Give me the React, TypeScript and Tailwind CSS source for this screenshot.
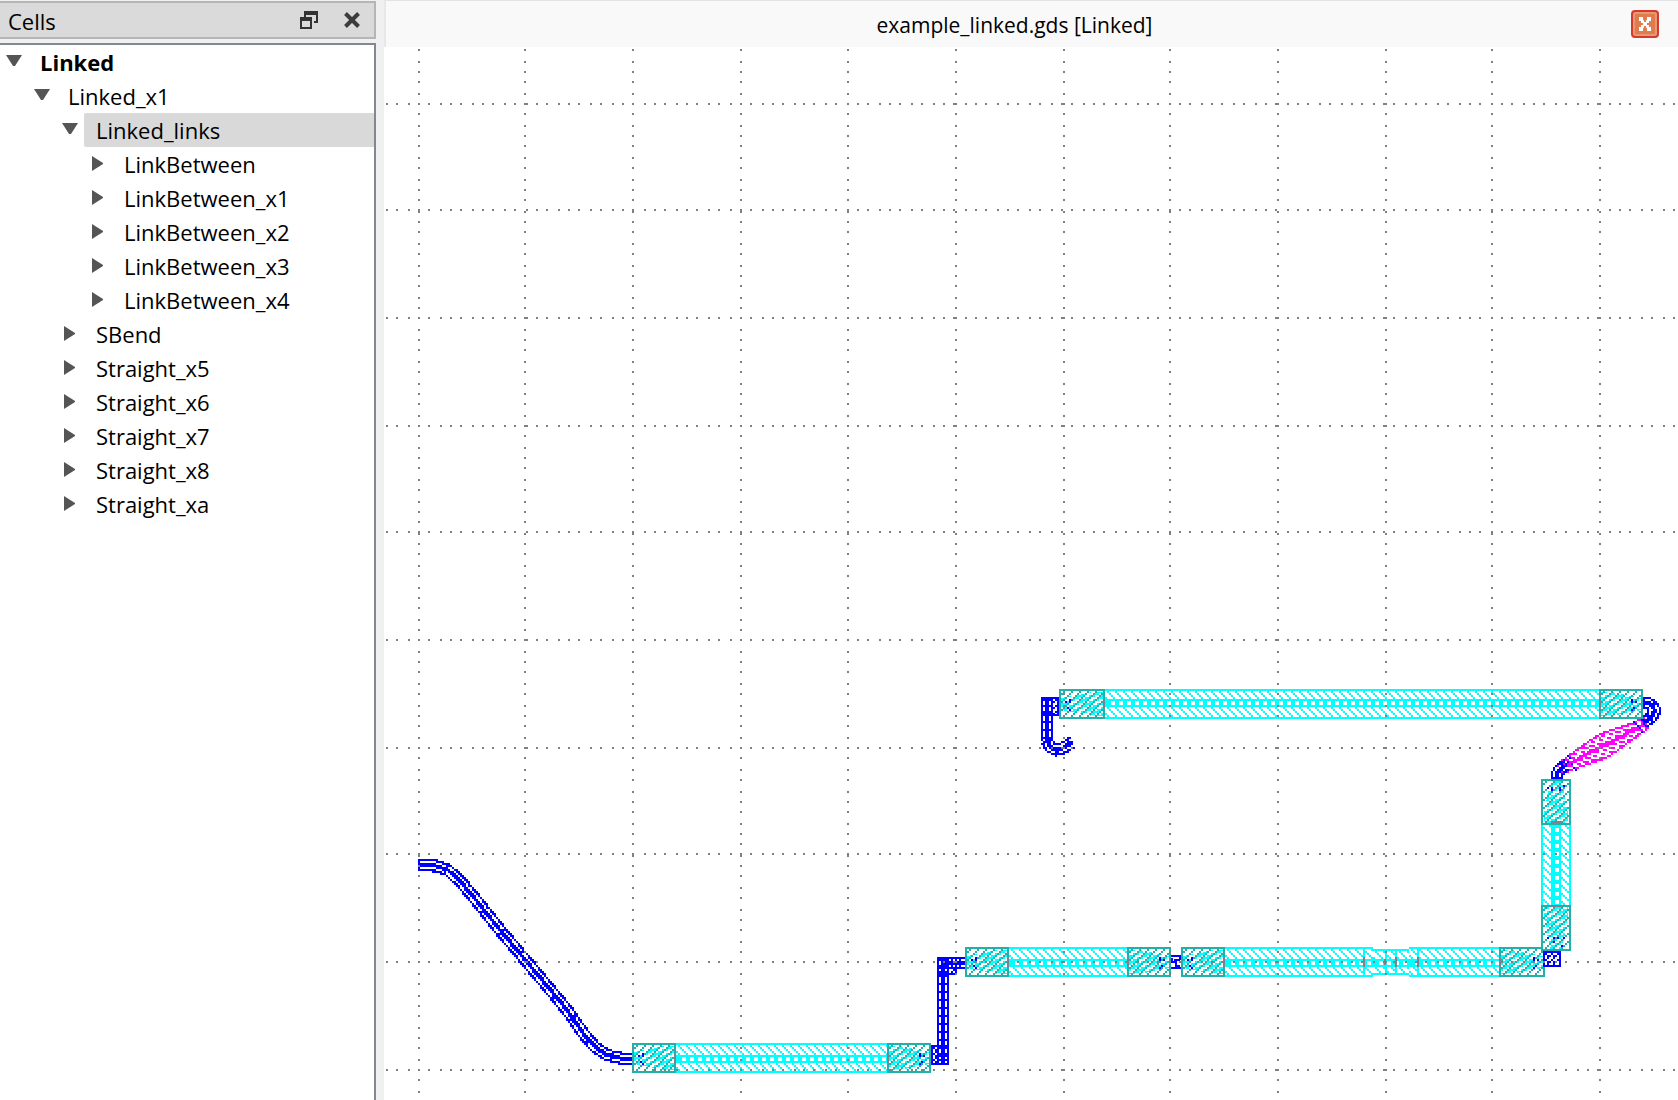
import { useState } from "react"
import { clsx } from "clsx"

type Cell = { name: string; level: number; open?: boolean }
type Point = [number, number]
type Side = "left" | "right" | "top" | "bottom"

const cells: Cell[] = [
  { name: "Linked", level: 0, open: true },
  { name: "Linked_x1", level: 1, open: true },
  { name: "Linked_links", level: 2, open: true },
  { name: "LinkBetween", level: 3 },
  { name: "LinkBetween_x1", level: 3 },
  { name: "LinkBetween_x2", level: 3 },
  { name: "LinkBetween_x3", level: 3 },
  { name: "LinkBetween_x4", level: 3 },
  { name: "SBend", level: 2 },
  { name: "Straight_x5", level: 2 },
  { name: "Straight_x6", level: 2 },
  { name: "Straight_x7", level: 2 },
  { name: "Straight_x8", level: 2 },
  { name: "Straight_xa", level: 2 },
]

const indents = ["pl-[6px]", "pl-[34px]", "pl-[62px]", "pl-[90px]"]

export default function App() {
  return (
    <div className="flex min-h-screen overflow-hidden bg-[#f0f0f0] font-['Open_Sans',sans-serif] text-[22px] text-black">
      <CellsPanel />
      <main className="ml-2 flex min-w-0 flex-1 flex-col bg-white">
        <header className="flex h-[47px] items-center border-t border-l-2 border-t-[#e3e3e3] border-l-[#e8e8e8] bg-[#f9f9f9] pr-[19px] pl-3">
          <h1 className="flex-1 pt-0.5 text-center text-[21px] leading-8 whitespace-nowrap">
            example_linked.gds [Linked]
          </h1>
          <button
            aria-label="Close view"
            className="flex size-7 items-center justify-center rounded-sm border-2 border-[#d9392b] bg-[#e07b4d] ring-2 ring-[#e39a74] ring-inset"
          >
            <svg viewBox="0 0 16 16" className="size-4" shapeRendering="crispEdges">
              <path
                fill="#fff"
                d="M2 1h4v3h1v2h2V4h1V1h4v4h-2v2h-2v2h2v2h2v4h-4v-3H9v-2H7v2H6v3H2v-4h2V9h2V7H4V5H2z"
              />
            </svg>
          </button>
        </header>
        <Layout />
      </main>
    </div>
  )
}

const CellsPanel = () => {
  const [selected, setSelected] = useState("Linked_links")
  return (
    <aside className="flex w-[376px] shrink-0 flex-col gap-1 pt-px">
      <div className="flex h-[38px] items-center border-2 border-l-0 border-[#b5b5b5] bg-[#dadada] pr-[14px] pl-2">
        <h2 className="flex-1 pt-0.5 leading-8">Cells</h2>
        <button aria-label="Float panel" className="mr-[26px]">
          <svg viewBox="0 0 18 18" className="size-[18px]" shapeRendering="crispEdges" fill="#333">
            <path d="M4 0h14v12h-4v-2h2V4H6v2H4z" />
            <path d="M0 6h12v12H0zM2 10v6h8v-6z" fillRule="evenodd" />
          </svg>
        </button>
        <button aria-label="Close panel">
          <svg viewBox="0 0 16 16" className="size-4" stroke="#3c3c3c" strokeWidth="4">
            <path d="M1.500 1.500l13 13M14.500 1.500l-13 13" />
          </svg>
        </button>
      </div>
      <ul role="tree" className="flex-1 border-t-2 border-r-2 border-[#828790] bg-white">
        {cells.map((cell) => (
          <li
            key={cell.name}
            role="treeitem"
            aria-selected={cell.name === selected}
            className={clsx("flex h-[34px] items-center", indents[cell.level])}
          >
            <svg viewBox="0 0 16 16" className="mr-[6px] size-4 shrink-0" fill="#555">
              {cell.open ? <path d="M0 1h16L9 12H7z" /> : <path d="M2 0l11 7v1L2 15z" />}
            </svg>
            <button
              onClick={() => setSelected(cell.name)}
              className={clsx(
                "h-full flex-1 rounded-l-xs pl-3 text-left leading-8",
                cell.name === selected && "bg-[#d9d9d9]",
                cell.level === 0 && "font-bold",
              )}
            >
              {cell.name}
            </button>
          </li>
        ))}
      </ul>
    </aside>
  )
}

// ---- layout drawing, everything snaps to 2 unit dots ----

const BLUE = "#0000ff"
const CYAN = "#00ffff"
const TEAL = "#20b2aa"
const MAGENTA = "#ff00ff"

const gridX = [418, 524, 632, 740, 847, 955, 1063, 1169, 1277, 1385, 1491, 1599]
const gridY = [103, 209, 317, 425, 531, 639, 747, 853, 961, 1069]
const STEP = 10.735

const dot = (x: number, y: number) => `M${x} ${y}h2v2h-2z`

function gridPath() {
  let d = ""
  for (let k = -5; k < 93; k++) {
    const y = 103 + 2 * Math.round((k * STEP) / 2)
    for (const x of gridX) d += dot(x, y)
  }
  for (let k = -3; k < 118; k++) {
    const raw = 418 + 2 * Math.floor((k * STEP) / 2 + 0.4)
    const x = raw > 800 ? raw - 1 : raw
    for (const y of gridY) d += dot(x, y)
  }
  return d
}

// Walks every dot around the line and keeps those the test accepts.
function trace(points: Point[], reach: number, keep: (offset: number, along: number, total: number) => boolean) {
  const xs = points.map((p) => p[0])
  const ys = points.map((p) => p[1])
  const startX = points[0][0] - 2 * Math.ceil((points[0][0] - Math.min(...xs) + reach) / 2)
  const startY = 2 * Math.floor((Math.min(...ys) - reach) / 2) + 1
  const lengths = points.slice(1).map((p, i) => Math.hypot(p[0] - points[i][0], p[1] - points[i][1]))
  const total = lengths.reduce((a, b) => a + b, 0)
  let d = ""
  for (let y = startY; y < Math.max(...ys) + reach; y += 2) {
    for (let x = startX; x < Math.max(...xs) + reach; x += 2) {
      let best = Infinity
      let offset = 0
      let along = 0
      let walked = 0
      lengths.forEach((length, i) => {
        const [ax, ay] = points[i]
        const ux = (points[i + 1][0] - ax) / length
        const uy = (points[i + 1][1] - ay) / length
        const px = x + 1 - ax
        const py = y + 1 - ay
        const t = px * ux + py * uy
        const clamped = Math.max(0, Math.min(length, t))
        const distance = Math.hypot(px - ux * clamped, py - uy * clamped)
        const outside = (i === 0 && t < 0) || (i === lengths.length - 1 && t > length)
        if (distance < best) {
          best = distance
          offset = outside ? Infinity : Math.sign(px * uy - py * ux) * distance
          along = walked + clamped
        }
        walked += length
      })
      if (keep(offset, along, total)) d += dot(x, y)
    }
  }
  return d
}

// `tie` is the spacing of the cross bars
const Wire = ({ points, tie = 8 }: { points: Point[]; tie?: number }) => {
  const d = trace(points, 8, (offset, along) => {
    const a = Math.abs(offset)
    return a < 6.2 && (a >= 4 || a < 2 || along % tie < 2)
  })
  return <path d={d} fill={BLUE} />
}

// Spindle shaped taper between the two upper bends
const Spindle = () => {
  const d = trace([[1559, 769], [1647, 723]], 18, (offset, along, total) => {
    const t = along / total
    const half = 6 + 7 * Math.max(0, 1 - Math.abs(t - 0.5) * 2)
    const a = Math.abs(offset)
    return a < half && (a > half - 2 || a < 1.8 || (along + offset + 100) % 6 < 2)
  })
  return <path d={d} fill={MAGENTA} />
}

// Square corner where two bends overlap
const Corner = ({ x, y, w, h }: { x: number; y: number; w: number; h: number }) => (
  <g transform={`translate(${x} ${y})`}>
    <rect width={w} height={h} fill="url(#blueHatch)" />
    <path d={`M1 1H${w - 1}V${h - 1}H1z`} fill="none" stroke={BLUE} strokeWidth="2" />
  </g>
)

const Band = ({ x, y, w, h, core = 12 }: { x: number; y: number; w: number; h: number; core?: number }) => {
  const vertical = h > w
  return (
    <g transform={`translate(${x} ${y})`}>
      <rect width={w} height={h} fill="#fff" />
      <rect width={w} height={h} fill="url(#cyanHatch)" />
      {vertical ? (
        <g>
          <rect x={core - 2} width="10" height={h} fill={CYAN} />
          <path d={`M${core + 4} 3V${h}`} stroke="#fff" strokeWidth="4" strokeDasharray="4 4" />
          <path d={`M1 0V${h}M${w - 1} 0V${h}`} stroke={CYAN} strokeWidth="2" />
        </g>
      ) : (
        <g>
          <rect y={core} width={w} height="8" fill={CYAN} />
          <path d={`M6 ${core + 4}H${w}`} stroke="#fff" strokeWidth="4" strokeDasharray="4 4" />
          <path d={`M0 1H${w}M0 ${h - 1}H${w}`} stroke={CYAN} strokeWidth="2" />
        </g>
      )}
    </g>
  )
}

// Teal transition box, `outer` is the side where the wire comes in
const Transition = ({ x, y, w, h, outer }: { x: number; y: number; w: number; h: number; outer: Side }) => {
  const tapers = {
    left: `2,9 ${w - 12},3 ${w - 2},3 ${w - 2},${h - 3} ${w - 12},${h - 3} 2,${h - 9}`,
    right: `${w - 2},9 12,3 2,3 2,${h - 3} 12,${h - 3} ${w - 2},${h - 9}`,
    top: `9,2 3,${h - 12} 3,${h - 2} ${w - 3},${h - 2} ${w - 3},${h - 12} ${w - 9},2`,
    bottom: `9,${h - 2} 3,12 3,2 ${w - 3},2 ${w - 3},12 ${w - 9},${h - 2}`,
  }
  const marks = {
    left: dot(6, 12) + dot(10, 10) + dot(10, 12) + dot(8, 18) + dot(10, 20),
    right: dot(w - 12, 10) + dot(w - 12, 12) + dot(w - 8, 12) + dot(w - 10, 18) + dot(w - 12, 20),
    top: dot(6, 8) + dot(10, 8) + dot(10, 10) + dot(18, 8) + dot(18, 10) + dot(22, 6),
    bottom: dot(6, h - 14) + dot(12, h - 14) + dot(16, h - 14) + dot(12, h - 10) + dot(22, h - 14) + dot(20, h - 6),
  }
  const ports = {
    left: `M${w - 2} 10h2v10h-2z`,
    right: "M0 10h2v10h-2z",
    top: `M10 ${h - 4}h10v2h-10z`,
    bottom: "M10 0h10v2h-10z",
  }
  return (
    <g transform={`translate(${x} ${y})`}>
      <rect width={w} height={h} fill="#fff" />
      <polygon points={tapers[outer]} fill="url(#cyanFine)" />
      <rect width={w} height={h} fill="url(#tealHatch)" />
      <path d={`M1 1H${w - 1}V${h - 1}H1z`} fill="none" stroke={TEAL} strokeWidth="2" />
      <path d={marks[outer]} fill={BLUE} />
      <path d={ports[outer]} fill="#808090" />
    </g>
  )
}

const Layout = () => {
  return (
    <svg
      viewBox="384 47 1294 1053"
      className="block h-auto w-full"
      shapeRendering="crispEdges"
      role="img"
      aria-label="Layout of cell Linked"
    >
      <defs>
        <pattern id="cyanHatch" width="8" height="8" patternUnits="userSpaceOnUse">
          <path d={dot(0, 0) + dot(2, 2) + dot(4, 4) + dot(6, 6)} fill={CYAN} />
        </pattern>
        <pattern id="tealHatch" width="8" height="8" patternUnits="userSpaceOnUse">
          <path d={dot(6, 0) + dot(4, 2) + dot(2, 4) + dot(0, 6)} fill={TEAL} />
        </pattern>
        <pattern id="cyanFine" width="12" height="6" patternUnits="userSpaceOnUse">
          <path d="M6 0h6v2h-6zM2 2h6v2h-6zM0 4h4v2h-4zM10 4h2v2h-2z" fill={CYAN} />
        </pattern>
        <pattern id="blueHatch" width="6" height="6" patternUnits="userSpaceOnUse">
          <path d={dot(4, 0) + dot(2, 2) + dot(0, 4) + dot(4, 4)} fill={BLUE} />
        </pattern>
      </defs>

      <Wire
        tie={28}
        points={[
          [418, 865], [436, 866], [448, 870], [460, 881], [472, 895], [500, 930], [527, 962],
          [553, 993], [567, 1010], [583, 1033], [595, 1047], [607, 1055], [620, 1058], [632, 1059],
        ]}
      />
      <Band x={676} y={1043} w={211} h={30} />
      <Transition x={632} y={1043} w={44} h={30} outer="left" />
      <Transition x={887} y={1043} w={44} h={30} outer="right" />

      <Corner x={931} y={1045} w={18} h={20} />
      <Corner x={937} y={957} w={20} h={18} />
      <Wire points={[[943, 1065], [943, 957]]} />
      <Wire points={[[943, 963], [965, 963]]} />

      <Band x={1009} y={947} w={118} h={30} />
      <Transition x={965} y={947} w={44} h={30} outer="left" />
      <Transition x={1127} y={947} w={44} h={30} outer="right" />
      <path d="M1171 956h10M1171 968h10M1172 958v4h4v4h4M1180 956v4M1174 960h6" fill="none" stroke={BLUE} strokeWidth="2" />
      <Band x={1225} y={947} w={148} h={30} />
      <Band x={1373} y={949} w={36} h={26} core={10} />
      <Band x={1409} y={947} w={90} h={30} />
      <path d="M1364 949v26M1386 949v26M1396 949v26M1418 949v26" stroke={CYAN} strokeWidth="2" />
      <path d="M1364 957v10M1385 959v6M1396 957v10M1418 957v10" stroke="#808090" strokeWidth="2" />
      <Transition x={1181} y={947} w={44} h={30} outer="left" />
      <Transition x={1499} y={947} w={46} h={30} outer="right" />
      <Corner x={1543} y={951} w={18} h={16} />

      <Band x={1541} y={825} w={30} h={80} />
      <Transition x={1541} y={779} w={30} h={46} outer="top" />
      <Transition x={1541} y={905} w={30} h={46} outer="bottom" />

      <Spindle />
      <Wire tie={14} points={[[1557, 779], [1557, 774], [1560, 769], [1567, 765]]} />
      <path d={dot(1567, 755) + dot(1569, 757) + dot(1567, 761) + dot(1571, 763) + dot(1573, 767) + dot(1575, 769)} fill={BLUE} />
      <Wire points={[[1643, 703], [1650, 704], [1655, 710], [1652, 717], [1643, 723]]} />
      <path d={dot(1633, 721) + dot(1637, 725) + dot(1639, 727) + dot(1641, 731) + dot(1635, 723)} fill={BLUE} />

      <Corner x={1041} y={697} w={18} h={19} />
      <Wire points={[[1047, 697], [1047, 740]]} />
      <Wire tie={14} points={[[1047, 740], [1050, 747], [1056, 750], [1063, 748], [1073, 742]]} />
      <Band x={1105} y={689} w={494} h={30} core={10} />
      <Transition x={1059} y={689} w={46} h={30} outer="left" />
      <Transition x={1599} y={689} w={44} h={30} outer="right" />

      <path d={gridPath()} fill="#808080" />
    </svg>
  )
}
